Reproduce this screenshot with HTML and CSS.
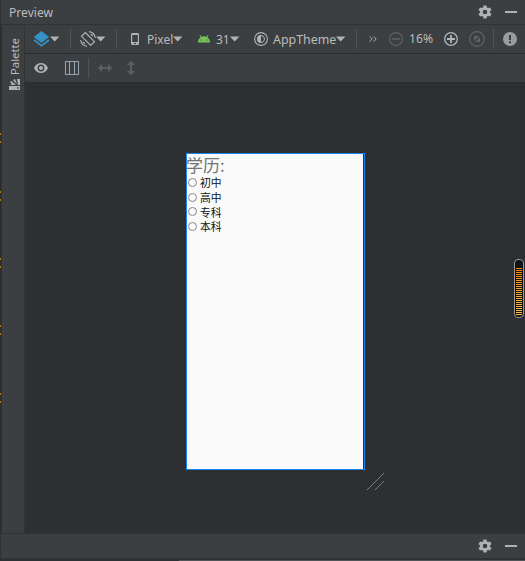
FILE: index.html
```html
<!DOCTYPE html>
<html lang="zh">
<head>
<meta charset="utf-8">
<title>Preview</title>
<link rel="stylesheet" href="styles.css">
</head>
<body>
<svg width="0" height="0" class="defs">
  <defs>
    <symbol id="gear" viewBox="0 0 14 14"><path fill-rule="evenodd" d="M5.500 .5h3l.4 1.900 1.200.7 1.900-.6 1.500 2.600-1.500 1.300v1.300l1.500 1.300-1.500 2.500-1.900-.6-1.200.7-.4 1.900h-3l-.4-1.900-1.200-.7-1.900.6L.5 9 2 7.700V6.400L.5 5.100 2 2.500l1.900.6 1.200-.7zM7 4.700a2.300 2.300 0 1 0 0 4.600 2.300 2.300 0 0 0 0-4.600z"/></symbol>
    <symbol id="caret" viewBox="0 0 10 6"><path d="M0 .5h9.400L4.700 5.500z"/></symbol>
  </defs>
</svg>
<div class="window">
  <header class="bar title">
    <span class="title-text">Preview</span>
    <svg class="gear"><use href="#gear"/></svg>
    <i class="minimize"></i>
  </header>
  <div class="main">
    <div class="gutter">
      <i class="mark m1"></i><i class="mark m2"></i><i class="mark"></i><i class="mark"></i><i class="mark m5"></i>
    </div>
    <aside class="palette">
      <span class="palette-text">Palette</span>
      <svg width="11" height="11" viewBox="0 0 11 11" fill="#afb1b3"><path fill-rule="evenodd" d="M0 7h11v4H0zM8 8.200v1.500h1.500V8.200z"/><path d="M1 3l1.500-1L7 6H2.500L1 5l2 .3zM4 1l2-1 2 5.500zM8 0h3v6H9z"/></svg>
    </aside>
    <section class="editor">
      <div class="toolbar">
        <svg class="layers" width="17" height="16" viewBox="0 0 17 16"><path fill="#3592c4" d="M8.500 0 16 6 8.500 12 .8 6z"/><path fill="none" stroke="#3592c4" stroke-width="1.800" d="M1 9l7.500 5.600L16 9"/></svg>
        <svg class="caret"><use href="#caret"/></svg>
        <i class="sep s1"></i>
        <svg class="rotate" width="16" height="16" viewBox="0 0 16 16" fill="none" stroke="#afb1b3" stroke-width="1.200"><path d="M5.300 1.500 14.500 10.700 10.700 14.500 1.500 5.300zM9 .7a7.300 7.300 0 0 1 6.300 6.300M.7 9A7.300 7.300 0 0 0 7 15.300M10.800 3l2 2M3 10.800l2 2"/></svg>
        <svg class="caret"><use href="#caret"/></svg>
        <i class="sep s1"></i>
        <svg class="phone" width="8" height="12" viewBox="0 0 8 12"><path fill="#afb1b3" fill-rule="evenodd" d="M1 0h6l1 1v10l-1 1H1l-1-1V1zM1.200 2v7h5.600V2zM3 10v1h2v-1z"/></svg>
        <span class="label pixel">Pixel</span>
        <svg class="caret tight"><use href="#caret"/></svg>
        <svg class="android" width="12" height="8" viewBox="0 0 12 8"><path fill="#78c257" fill-rule="evenodd" d="M0 7.500C.1 5 1.100 3.200 2.600 2.200L1.500.5l.7-.4 1.200 1.700c1.600-.7 3.600-.7 5.200 0L9.800.1l.7.4-1.100 1.700C10.900 3.200 11.900 5 12 7.500zM2.700 4.500v1h1v-1zm5.600 0v1h1v-1z"/></svg>
        <span class="label api">31</span>
        <svg class="caret tight"><use href="#caret"/></svg>
        <svg class="theme" width="14" height="14" viewBox="0 0 14 14"><circle cx="7" cy="7" r="6.400" fill="none" stroke="#afb1b3" stroke-width="1.100"/><circle cx="7" cy="7" r="3.500" fill="none" stroke="#afb1b3"/><path fill="#afb1b3" d="M7 3a4 4 0 0 0 0 8z"/></svg>
        <span class="label app">AppTheme</span>
        <svg class="caret tight"><use href="#caret"/></svg>
        <i class="sep s2"></i>
        <svg class="more" width="8" height="6" viewBox="0 0 8 6" fill="none" stroke="#afb1b3"><path d="M.7.500 3.200 3 .7 5.500M4.700.500 7.200 3 4.700 5.500"/></svg>
        <svg class="minus" width="14" height="14" viewBox="0 0 14 14" fill="none" stroke="#606365"><circle cx="7" cy="7" r="6.400" stroke-width="1.100"/><path stroke-width="1.600" d="M3 7h8"/></svg>
        <span class="label zoom">16%</span>
        <svg class="plus" width="14" height="14" viewBox="0 0 14 14" fill="none" stroke="#b4b6b8"><circle cx="7" cy="7" r="6.300" stroke-width="1.300"/><path stroke-width="1.800" d="M3 7h8M7 3v8"/></svg>
        <svg class="fit" width="16" height="16" viewBox="0 0 16 16"><circle cx="8" cy="8" r="7.300" fill="none" stroke="#606365" stroke-width="1.200"/><path fill="#606365" d="M5 5h5L5 10zM11 6v5H6z"/></svg>
        <i class="sep s3"></i>
        <svg class="warn" width="14" height="14" viewBox="0 0 14 14"><circle cx="7" cy="7" r="7" fill="#999b9c"/><path fill="#3c3f41" d="M6 3h2v5H6zM6 9.300h2v1.900H6z"/></svg>
      </div>
      <div class="toolbar second">
        <svg class="eye" width="14" height="10" viewBox="0 0 14 10"><path fill="#afb1b3" fill-rule="evenodd" d="M0 5C1.500 1.800 4 0 7 0s5.500 1.800 7 5c-1.500 3.200-4 5-7 5S1.500 8.200 0 5zM7 1.600a3.400 3.400 0 1 0 0 6.800 3.400 3.400 0 0 0 0-6.800z"/><circle cx="7" cy="5" r="2" fill="#afb1b3"/></svg>
        <svg class="columns" width="14" height="14" viewBox="0 0 14 14" fill="none" stroke="#9aa7b0"><path d="M.5.5h13v13H.5zM4.500 0v14M9.500 0v14"/></svg>
        <i class="sep s4"></i>
        <svg class="horiz" width="14" height="8" viewBox="0 0 14 8"><path fill="#5c5f61" d="M0 4l4-4v3h6V0l4 4-4 4V5H4v3z"/></svg>
        <svg class="vert" width="8" height="14" viewBox="0 0 8 14"><path fill="#5c5f61" d="M4 0l4 4H5v6h3l-4 4-4-4h3V4H0z"/></svg>
      </div>
      <div class="canvas">
        <div class="device">
          <div class="screen">
            <div class="heading">学历:</div>
            <div class="option"><i class="radio"></i>初中</div>
            <div class="option"><i class="radio"></i>高中</div>
            <div class="option"><i class="radio"></i>专科</div>
            <div class="option"><i class="radio"></i>本科</div>
          </div>
          <svg class="resize" width="17" height="17" viewBox="0 0 17 17" fill="none" stroke="#85888a" stroke-width=".9"><path d="M0 17 17 0M8 17l9-9"/></svg>
        </div>
        <div class="meter"><i class="level"></i></div>
      </div>
    </section>
  </div>
  <footer class="bar bottom">
    <svg class="gear"><use href="#gear"/></svg>
    <i class="minimize"></i>
  </footer>
  <div class="edge"><i class="edge-light"></i></div>
</div>
</body>
</html>
```
FILE: styles.css
```css
* { box-sizing: border-box; }
body { margin: 0; background: #2e2f30; color: #bbbbbb; font: 12.5px/16px "Noto Sans", "Noto Sans CJK SC", sans-serif; overflow: hidden; }
svg { display: block; flex: none; }
i { display: block; flex: none; }
.defs { position: absolute; }
.window { width: 525px; height: 561px; display: flex; flex-direction: column; }
.bar { display: flex; align-items: center; flex: none; height: 25px; background: #3c3f41; border-left: 1px solid #2f3132; }
.title { border-bottom: 1px solid #323232; }
.title-text { margin-left: 8px; margin-top: 2px; font-size: 12.1px; }
.gear { width: 14px; height: 14px; margin-left: auto; fill: #afb1b3; }
.minimize { width: 12px; height: 2px; margin: 0 8px 0 13px; background: #afb1b3; }
.main { display: flex; height: 508px; }
.gutter { width: 2px; background: #2b2b2b; border-right: 1px solid #323232; display: flex; flex-direction: column; }
.mark { width: 1px; height: 10px; border-top: 2px solid #a87b13; border-bottom: 2px solid #a87b13; margin-top: 57px; }
.m1 { margin-top: 108px; }
.m2 { margin-top: 48px; }
.m5 { margin-top: 58px; }
.palette { width: 23px; background: #3c3f41; border-right: 1px solid #323435; display: flex; flex-direction: column; align-items: center; padding: 12px 0 0 3px; }
.palette-text { writing-mode: vertical-rl; transform: rotate(180deg); font-size: 11.300px; height: 38px; margin-bottom: 4px; line-height: 15px; }
.editor { width: 500px; display: flex; flex-direction: column; }
.toolbar { display: flex; align-items: center; height: 29px; flex: none; background: #3c3f41; border-bottom: 1px solid #292b2c; padding-left: 8px; }
.layers { margin-right: -1px; }
.caret { width: 10px; height: 6px; margin-left: 1px; fill: #afb1b3; }
.caret.tight { margin-left: 0; }
.sep { width: 1px; height: 20px; background: #515456; }
.s1 { margin-left: 10px; margin-right: 9px; }
.rotate { margin-right: -1px; }
.phone { margin-left: 5px; }
.label { flex: none; white-space: nowrap; padding-top: 1px; }
.pixel { width: 26px; margin-left: 8px; font-size: 12px; }
.android { margin-left: 15px; }
.api { width: 14px; margin-left: 6px; font-size: 12px; }
.theme { margin-left: 14px; }
.app { width: 63px; margin-left: 5px; font-size: 12.400px; }
.s2 { margin-left: 10px; }
.more { margin-left: 12px; }
.minus { margin-left: 12px; }
.zoom { width: 26px; margin-left: 6px; font-size: 12.200px; margin-top: -2px; }
.plus { margin-left: 9px; }
.fit { margin-left: 11px; }
.s3 { margin-left: 8px; }
.warn { margin-left: 9px; }
.eye { margin-left: 1px; }
.columns { margin-left: 17px; }
.s4 { margin-left: 9px; }
.horiz { margin-left: 9px; }
.vert { margin-left: 15px; }
.canvas { flex: 1; display: flex; align-items: flex-start; background: #2e2f30; }
.device { margin: 70px 0 0 161px; width: 179px; height: 317px; flex: none; border: 1px solid #1886f7; background: #20354c; position: relative; }
.screen { width: 176px; height: 315px; background: #fafafa; color: #111; }
.heading { height: 21px; margin-left: -1px; font: 17px/21px "Noto Sans CJK SC", sans-serif; color: #757575; }
.option { display: flex; align-items: center; height: 14.800px; font: 10.800px/14.800px "Noto Sans CJK SC", sans-serif; }
.radio { width: 9px; height: 9px; margin: 0 3px 0 1px; border: 1px solid #858585; border-radius: 50%; }
.resize { position: absolute; left: 180px; top: 319px; }
.meter { width: 10px; height: 59px; margin: 176px 0 0 149px; flex: none; border: 1px solid #999; border-radius: 4px; background: #111416; padding: 8px 1px 2px; }
.level { width: 6px; height: 48px; background: repeating-linear-gradient(transparent 0 1px, #111416 1px 2px), linear-gradient(#ff8500, #ffc34a); }
.bottom { height: 25px; border-top: 1px solid #323232; }
.edge { height: 3px; background: #303132; display: flex; align-items: flex-end; }
.edge-light { width: 346px; height: 1px; margin-left: 179px; background: #515355; }
```
